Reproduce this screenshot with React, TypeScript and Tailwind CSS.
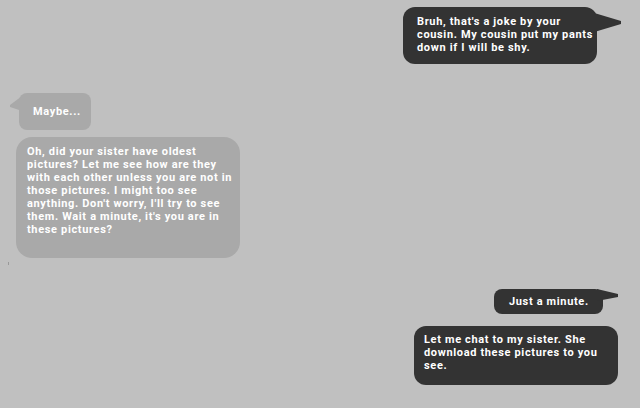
import React from 'react';

const font = { fontFamily: 'Roboto, "Noto Sans", sans-serif' };

const App: React.FC = () => {
  return (
    <div
      className="w-[640px] h-[408px] bg-[#c0c0c0] flex flex-col overflow-hidden text-[11px] leading-[13px] tracking-[0.65px] font-bold text-white"
      style={font}
    >
      {/* outgoing */}
      <div className="self-end mr-[43px] mt-[7px] relative w-[194px] h-[57px] rounded-[12px] bg-[#333333] pl-[14px] pt-[8px]">
        <span className="block">Bruh, that's a joke by your</span>
        <span className="block">cousin. My cousin put my pants</span>
        <span className="block">down if I will be shy.</span>
        <svg className="absolute left-[188px] top-[5px]" width="32" height="24" viewBox="0 0 32 24">
          <polygon points="0,0 30,9 30,12 0,21" fill="#333333" />
        </svg>
      </div>

      {/* incoming */}
      <div className="self-start ml-[19px] mt-[29px] relative w-[72px] h-[37px] rounded-[8px] bg-[#a9a9a9] pl-[14px] flex items-center">
        <span>Maybe...</span>
        <svg className="absolute left-[-10px] top-[3px]" width="14" height="16" viewBox="0 0 14 16">
          <polygon points="13,0 1,9 1,11 13,15" fill="#a9a9a9" />
        </svg>
      </div>

      <div className="self-start ml-[16px] mt-[7px] w-[224px] h-[121px] rounded-[16px] bg-[#a9a9a9] pl-[11px] pt-[8px]">
        <span className="block">Oh, did your sister have oldest</span>
        <span className="block">pictures? Let me see how are they</span>
        <span className="block">with each other unless you are not in</span>
        <span className="block">those pictures. I might too see</span>
        <span className="block">anything. Don't worry, I'll try to see</span>
        <span className="block">them. Wait a minute, it's you are in</span>
        <span className="block">these pictures?</span>
      </div>

      <div className="self-start ml-[8px] mt-[4px] w-px h-[3px] bg-[#999999]" />

      {/* outgoing */}
      <div className="self-end mr-[37px] mt-[24px] relative w-[109px] h-[25px] rounded-[8px] bg-[#333333] pl-[15px] flex items-center">
        <span>Just a minute.</span>
        <svg className="absolute left-[103px] top-[0px]" width="22" height="14" viewBox="0 0 22 14">
          <polygon points="0,0 21,5 21,8 0,12" fill="#333333" />
        </svg>
      </div>

      <div className="self-end mr-[22px] mt-[12px] w-[204px] h-[59px] rounded-[12px] bg-[#333333] pl-[10px] pt-[7px]">
        <span className="block">Let me chat to my sister. She</span>
        <span className="block">download these pictures to you</span>
        <span className="block">see.</span>
      </div>
    </div>
  );
};

export default App;
